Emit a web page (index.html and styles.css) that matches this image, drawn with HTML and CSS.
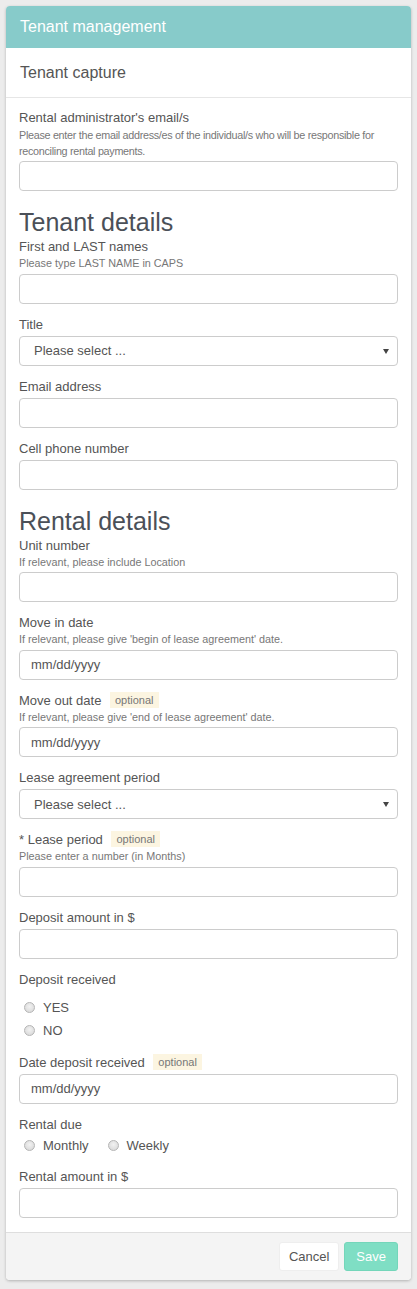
FILE: index.html
```html
<!DOCTYPE html>
<html lang="en">
<head>
    <meta charset="UTF-8">
    <meta name="viewport" content="width=device-width, initial-scale=1.0">
    <title>Tenant management</title>
    <link rel="stylesheet" href="styles.css">
</head>
<body>
    <div class="card">
        <div class="card-head">Tenant management</div>
        <div class="card-sub">Tenant capture</div>

        <form class="card-body">
            <div class="group">
                <label class="lbl">Rental administrator's email/s</label>
                <div class="help tight">Please enter the email address/es of the individual/s who will be responsible for reconciling rental payments.</div>
                <input type="text" class="field">
            </div>

            <h2 class="section">Tenant details</h2>
            <div class="group">
                <label class="lbl">First and LAST names</label>
                <div class="help">Please type LAST NAME in CAPS</div>
                <input type="text" class="field">
            </div>
            <div class="group">
                <label class="lbl">Title</label>
                <div class="select"><select class="field"><option>Please select ...</option></select></div>
            </div>
            <div class="group">
                <label class="lbl">Email address</label>
                <input type="text" class="field">
            </div>
            <div class="group">
                <label class="lbl">Cell phone number</label>
                <input type="text" class="field">
            </div>

            <h2 class="section">Rental details</h2>
            <div class="group">
                <label class="lbl">Unit number</label>
                <div class="help">If relevant, please include Location</div>
                <input type="text" class="field">
            </div>
            <div class="group">
                <label class="lbl">Move in date</label>
                <div class="help">If relevant, please give 'begin of lease agreement' date.</div>
                <input type="text" class="field" placeholder="mm/dd/yyyy">
            </div>
            <div class="group">
                <label class="lbl">Move out date <span class="opt">optional</span></label>
                <div class="help">If relevant, please give 'end of lease agreement' date.</div>
                <input type="text" class="field" placeholder="mm/dd/yyyy">
            </div>
            <div class="group">
                <label class="lbl">Lease agreement period</label>
                <div class="select"><select class="field"><option>Please select ...</option></select></div>
            </div>
            <div class="group">
                <label class="lbl">* Lease period <span class="opt">optional</span></label>
                <div class="help">Please enter a number (in Months)</div>
                <input type="text" class="field">
            </div>
            <div class="group">
                <label class="lbl">Deposit amount in $</label>
                <input type="text" class="field">
            </div>
            <div class="group">
                <label class="lbl">Deposit received</label>
                <div class="radios stacked">
                    <label class="radio"><input type="radio" name="dep"> YES</label>
                    <label class="radio"><input type="radio" name="dep"> NO</label>
                </div>
            </div>
            <div class="group">
                <label class="lbl">Date deposit received <span class="opt">optional</span></label>
                <input type="text" class="field" placeholder="mm/dd/yyyy">
            </div>
            <div class="group">
                <label class="lbl">Rental due</label>
                <div class="radios inline">
                    <label class="radio"><input type="radio" name="due"> Monthly</label>
                    <label class="radio"><input type="radio" name="due"> Weekly</label>
                </div>
            </div>
            <div class="group">
                <label class="lbl">Rental amount in $</label>
                <input type="text" class="field">
            </div>
        </form>

        <div class="card-foot">
            <button type="button" class="btn">Cancel</button>
            <button type="button" class="btn btn-save">Save</button>
        </div>
    </div>
</body>
</html>
```

FILE: styles.css
```css
body { margin: 0; padding: 6px; background: #ececec; font-family: "Liberation Sans", Arial, sans-serif; font-size: 13px; color: #555; }
.card { background: #fff; border-radius: 4px; box-shadow: 0 1px 3px rgba(0,0,0,.25); overflow: hidden; }
.card-head { background: #87cbca; color: #fff; font-size: 16px; line-height: 22px; padding: 10px 14px; }
.card-sub { font-size: 16px; line-height: 22px; padding: 14px 14px 13px; border-bottom: 1px solid #e6e6e6; }
.card-body { padding: 11px 13px 2px; }

.group { margin-bottom: 12px; }
.lbl { display: block; line-height: 18px; color: #555; }
.help { font-size: 10.8px; line-height: 15.5px; color: #777; }
.help.tight { letter-spacing: -0.3px; line-height: 16px; }
.section { font-size: 25px; font-weight: normal; line-height: 29px; color: #4b5058; margin: 17px 0 1px; }

.field { display: block; box-sizing: border-box; width: 100%; height: 30px; margin-top: 2px; padding: 0 11px; border: 1px solid #ccc; border-radius: 4px; background: #fff; font-family: inherit; font-size: 13px; color: #555; }
.field::placeholder { color: #555; }
.select { position: relative; }
.select select { appearance: none; -webkit-appearance: none; padding-left: 14px; }
.select::after { content: ""; position: absolute; right: 9px; top: 13px; border-left: 3px solid transparent; border-right: 3px solid transparent; border-top: 5px solid #444; }

.opt { display: inline-block; font-size: 11px; line-height: 16px; padding: 0 5px; margin-left: 5px; background: #fcf5e1; color: #777; vertical-align: 1px; }

.radios.stacked { display: flex; flex-direction: column; gap: 1px; padding-top: 8px; }
.radios.stacked .radio { height: 22px; }
.radios.inline { display: flex; gap: 14px; padding-top: 2px; }
.radios.inline .radio { height: 20px; }
.radio { display: flex; align-items: center; gap: 8px; padding-left: 5px; color: #555; }
.radio input { appearance: none; -webkit-appearance: none; width: 11px; height: 11px; margin: 0; border: 1px solid #b5b5b5; border-radius: 50%; background: radial-gradient(circle at 50% 40%, #f2f2f2, #d4d4d4); }

.card-foot { display: flex; justify-content: flex-end; gap: 5px; padding: 9px 13px; background: #f4f4f4; border-top: 1px solid #dedede; }
.btn { height: 29px; padding: 0 9px; border: 1px solid #eee; border-radius: 3px; background: #fff; font-family: inherit; font-size: 13px; color: #555; cursor: pointer; }
.btn-save { background: #7fdec4; border-color: #74d6ba; color: #fff; padding: 0 11px; }
```
